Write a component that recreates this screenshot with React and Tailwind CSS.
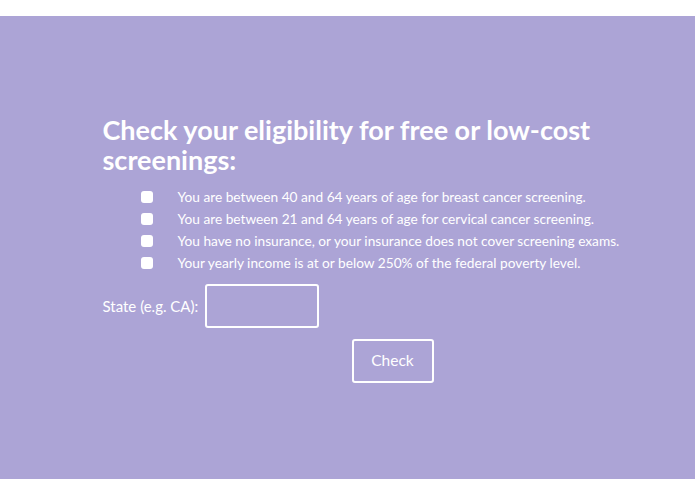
import React from 'react';

const criteria = [
  'You are between 40 and 64 years of age for breast cancer screening.',
  'You are between 21 and 64 years of age for cervical cancer screening.',
  'You have no insurance, or your insurance does not cover screening exams.',
  'Your yearly income is at or below 250% of the federal poverty level.',
];

export default function App() {
  return (
    <div className="min-h-[494px] bg-white pt-4 font-['Lato',sans-serif] text-white">
      <section className="h-[463px] bg-[#aca4d6] pt-[99px]">
        <div className="mx-auto w-[490px]">
          <h2 className="text-[27px] font-bold leading-[30px]">
            Check your eligibility for free or low-cost screenings:
          </h2>

          {/* Checklist */}
          <ul className="mt-[11px] pl-[38px]">
            {criteria.map((text) => (
              <li key={text} className="flex h-[22px] items-center gap-[25px] text-[13.7px]">
                <input type="checkbox" className="h-3 w-3 shrink-0 appearance-none rounded-[3px] bg-white" />
                <span className="whitespace-nowrap">{text}</span>
              </li>
            ))}
          </ul>

          <div className="mt-[10px] flex h-[44px] items-center">
            <label className="text-[15px]">State (e.g. CA):</label>
            <input
              type="text"
              className="ml-[7px] h-[44px] w-[114px] rounded-[3px] border-2 border-white bg-transparent px-2 outline-none"
            />
          </div>

          <button className="ml-[249px] mt-[11px] h-[44px] w-[82px] rounded-[3px] border-2 border-white text-[15.5px]">
            Check
          </button>
        </div>
      </section>
    </div>
  );
}
